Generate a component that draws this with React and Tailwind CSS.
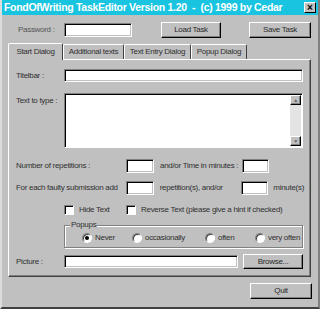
import React from "react";

const font = { fontFamily: '"Liberation Sans", Arial, sans-serif' };

function Sunken({ className = "" }) {
  return (
    <div
      className={
        "bg-white border border-t-[#808080] border-l-[#808080] border-b-white border-r-white shadow-[inset_1px_1px_0_#000,inset_-1px_-1px_0_#c0c0c0] " +
        className
      }
    />
  );
}

function Button({ children, className = "" }) {
  return (
    <div
      className={
        "flex items-center justify-center bg-[#c0c0c0] border border-t-white border-l-white border-b-[#000] border-r-[#000] shadow-[inset_-1px_-1px_0_#808080] text-[#2a2a2a] whitespace-nowrap " +
        className
      }
    >
      {children}
    </div>
  );
}

function Check({ label, className = "" }) {
  return (
    <div className={"flex items-center gap-[5px] whitespace-nowrap " + className}>
      <div className="w-[10px] h-[10px] shrink-0 bg-white border border-t-[#808080] border-l-[#808080] border-b-white border-r-white shadow-[inset_1px_1px_0_#000]" />
      <span>{label}</span>
    </div>
  );
}

function Radio({ label, on, className = "" }) {
  return (
    <div className={"flex items-center gap-[3px] whitespace-nowrap " + className}>
      <div className="w-[10px] h-[10px] shrink-0 rounded-full bg-white border border-t-[#808080] border-l-[#808080] border-b-white border-r-white shadow-[inset_1px_1px_0_#404040] flex items-center justify-center">
        {on && <div className="w-[4px] h-[4px] rounded-full bg-black" />}
      </div>
      <span>{label}</span>
    </div>
  );
}

function Tab({ children, active, className = "" }) {
  return (
    <div
      className={
        "flex items-center justify-center whitespace-nowrap bg-[#c0c0c0] border-t border-l border-r border-t-white border-l-white border-r-[#404040] rounded-t-[2px] " +
        (active ? "h-[17px] z-10 -mb-[1px] " : "h-[15px] ") +
        className
      }
    >
      {children}
    </div>
  );
}

export default function App() {
  return (
    <div
      style={font}
      className="w-[320px] h-[309px] bg-[#c0c0c0] text-[8px] tracking-[-0.3px] text-[#303030] flex flex-col border-l-[2px] border-l-[#dcdcdc] border-b-[2px] border-b-[#404040] border-r-[2px] border-r-[#808080] overflow-hidden"
    >
      <div className="h-[15px] bg-[#18c4e0] flex items-center justify-between pl-[2px] pr-[2px] tracking-normal">
        <span className="text-white font-bold text-[10.5px] tracking-[-0.3px] whitespace-pre">
          FondOfWriting TaskEditor Version 1.20  -  (c) 1999 by Cedar
        </span>
        <div className="w-[12px] h-[11px] bg-[#c0c0c0] border border-t-white border-l-white border-b-black border-r-black flex items-center justify-center text-[10px] font-bold leading-none text-black">
          ×
        </div>
      </div>

      <div className="flex items-center h-[15px] mt-[7px] whitespace-nowrap">
        <span className="ml-[16px] w-[46px] text-[#555]">Password :</span>
        <Sunken className="w-[68px] h-[14px]" />
        <Button className="ml-[29px] w-[60px] h-[16px]">Load Task</Button>
        <Button className="ml-[28px] w-[62px] h-[16px]">Save Task</Button>
      </div>

      <div className="flex items-end ml-[6px] mt-[5px] h-[17px] relative">
        <Tab active className="w-[55px]">Start Dialog</Tab>
        <Tab className="w-[61px]">Additional texts</Tab>
        <Tab className="w-[67px]">Text Entry Dialog</Tab>
        <Tab className="w-[56px]">Popup Dialog</Tab>
      </div>

      <div className="ml-[6px] w-[303px] h-[218px] border border-t-white border-l-white border-b-[#404040] border-r-[#404040] shadow-[inset_-1px_-1px_0_#808080] flex flex-col pl-[7px] pr-[6px] whitespace-nowrap">
        <div className="flex items-center mt-[9px] h-[13px]">
          <span className="w-[48px]">Titelbar :</span>
          <Sunken className="w-[239px] h-[13px]" />
        </div>

        <div className="flex mt-[11px]">
          <span className="w-[48px] mt-[2px]">Text to type :</span>
          <div className="w-[239px] h-[55px] bg-white border border-t-[#808080] border-l-[#808080] border-b-white border-r-white shadow-[inset_1px_1px_0_#000] flex justify-end pt-[1px] pr-[1px] pb-[1px]">
            <div className="w-[11px] flex flex-col bg-[#e4e4e4]">
              <Button className="h-[10px] w-[11px] text-[5px] leading-none text-[#666]">▲</Button>
              <div className="flex-1" />
              <Button className="h-[10px] w-[11px] text-[5px] leading-none text-[#666]">▼</Button>
            </div>
          </div>
        </div>

        <div className="flex items-center mt-[11px] h-[14px]">
          <span className="w-[110px]">Number of repetitions :</span>
          <Sunken className="w-[28px] h-[14px]" />
          <span className="ml-[6px] w-[82px]">and/or Time in minutes :</span>
          <Sunken className="w-[27px] h-[14px]" />
        </div>

        <div className="flex items-center mt-[8px] h-[14px]">
          <span className="w-[110px]">For each faulty submission add</span>
          <Sunken className="w-[28px] h-[14px]" />
          <span className="ml-[6px] w-[82px]">repetition(s), and/or</span>
          <Sunken className="w-[27px] h-[14px]" />
          <span className="ml-[5px]">minute(s)</span>
        </div>

        <div className="flex items-center mt-[9px] h-[12px]">
          <Check label="Hide Text" className="ml-[48px] w-[62px]" />
          <Check label="Reverse Text (please give a hint if checked)" />
        </div>

        <div className="relative ml-[48px] mt-[9px] w-[239px] h-[23px] border border-[#808080] shadow-[1px_1px_0_#fff,inset_1px_1px_0_#fff] flex items-center">
          <span className="absolute -top-[6px] left-[5px] px-[1px] bg-[#c0c0c0] leading-[10px]">Popups</span>
          <div className="flex items-center h-[12px] mt-[3px]">
            <Radio label="Never" on className="ml-[17px] w-[50px]" />
            <Radio label="occasionally" className="w-[73px]" />
            <Radio label="often" className="w-[50px]" />
            <Radio label="very often" />
          </div>
        </div>

        <div className="flex items-center mt-[6px] h-[15px]">
          <span className="w-[48px]">Picture :</span>
          <Sunken className="w-[174px] h-[13px]" />
          <Button className="ml-[5px] w-[60px] h-[15px]">Browse...</Button>
        </div>
      </div>

      <div className="flex mt-[6px]">
        <Button className="ml-[248px] w-[62px] h-[16px]">Quit</Button>
      </div>
    </div>
  );
}
